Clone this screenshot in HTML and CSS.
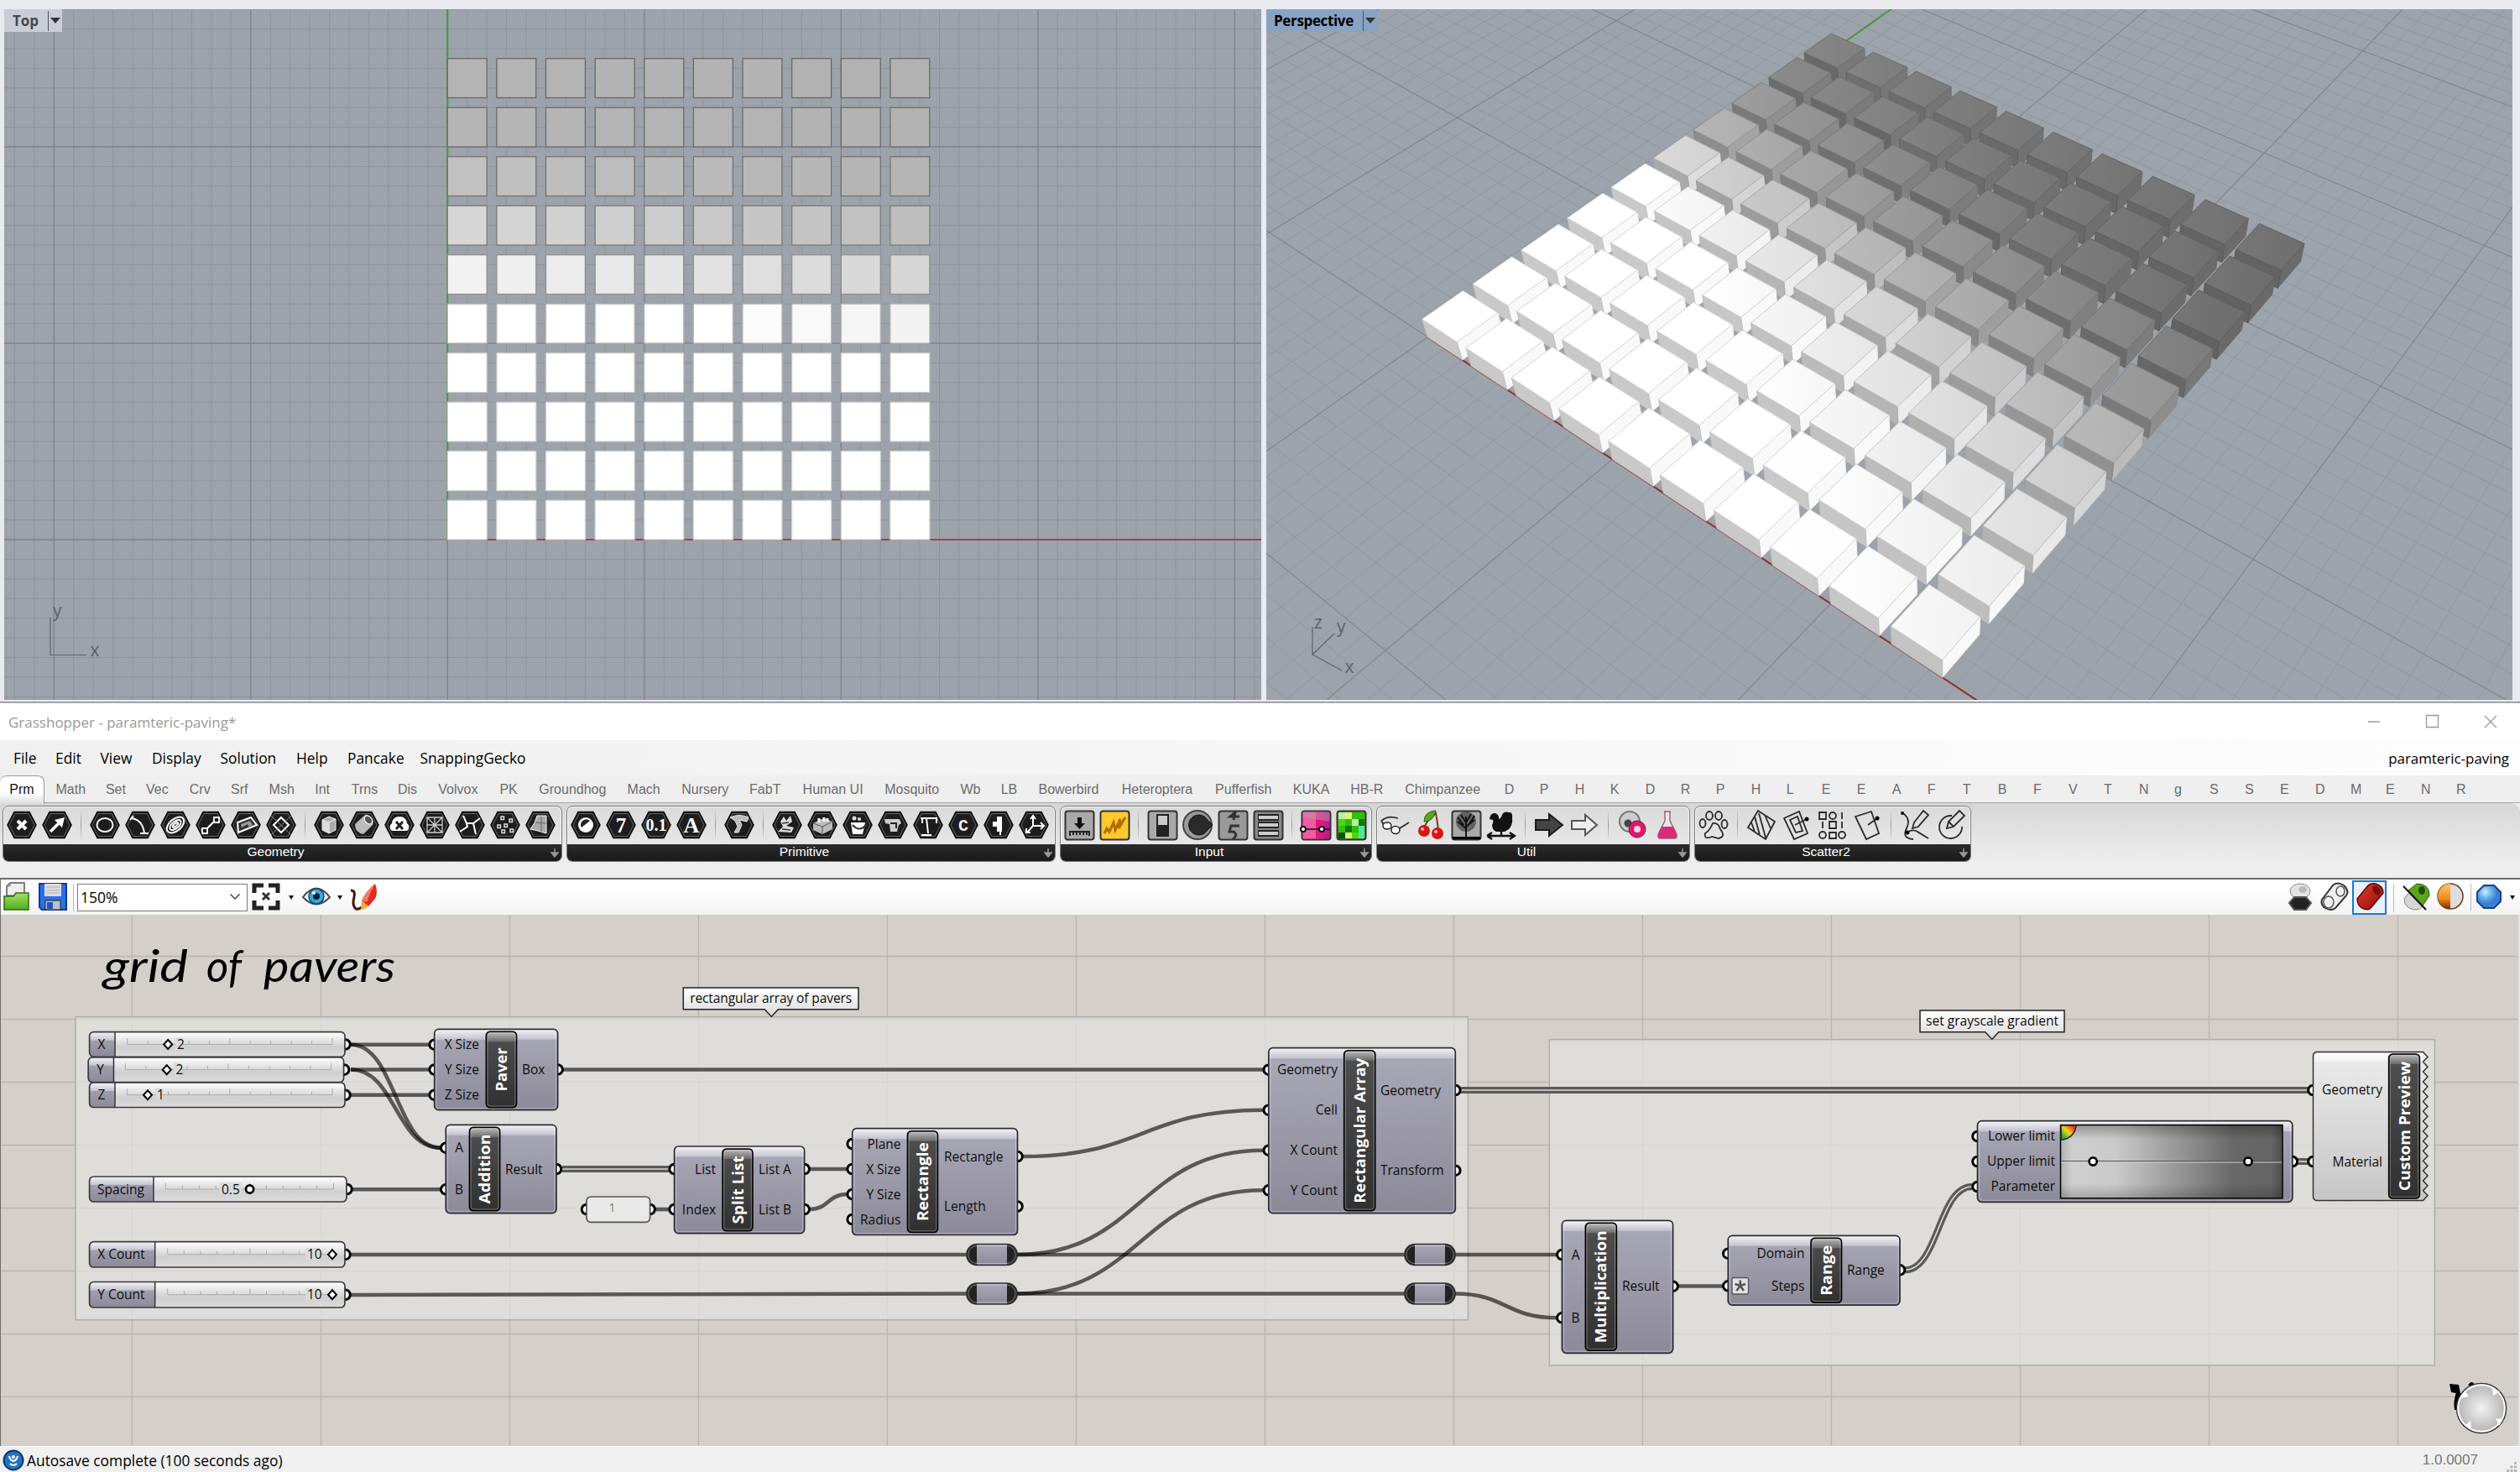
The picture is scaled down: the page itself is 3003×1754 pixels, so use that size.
FILE: index.html
```html
<!DOCTYPE html>
<html lang="en">
<head>
<meta charset="utf-8">
<title>Grasshopper - paramteric-paving*</title>
<link rel="stylesheet" href="styles.css">
</head>
<body>
<main class="desktop">
  <section class="rhino">
    <div class="viewport viewport-top">
      <svg id="topView" class="scene" viewBox="5 11 1498 823"></svg>
      <div class="vp-label"><span>Top</span><i class="caret"></i></div>
    </div>
    <div class="viewport viewport-persp">
      <svg id="perspView" class="scene" viewBox="1509 11 1485 823"></svg>
      <div class="vp-label vp-active"><span>Perspective</span><i class="caret"></i></div>
    </div>
  </section>

  <section class="gh">
    <header class="titlebar">
      <span class="title">Grasshopper - paramteric-paving*</span>
      <svg class="winbtns" width="150" height="20" viewBox="0 0 150 20"><path d="M1 10H15M70.500 2.500h14v14h-14zM140 3l14 14M154 3l-14 14"/></svg>
    </header>
    <nav class="menubar" id="menubar"></nav>
    <nav class="tabs" id="tabs"></nav>
    <div class="ribbon" id="ribbon"></div>
    <div class="toolbar">
      <svg class="ic" viewBox="0 0 34 36"><path d="M5 16V5l4-4h17v16z" fill="#eee" stroke="#555" stroke-width="1.500"/><path d="M9 1v4H5" fill="none" stroke="#777"/><path d="M2 17h11l3-4h15v20H2z" fill="url(#gGreen)" stroke="#2f6b14" stroke-width="1.500"/></svg>
      <svg class="ic ic-save" viewBox="0 0 34 36"><path d="M1 2h32v31H4l-3-3z" fill="#2a6fe8" stroke="#123a9a" stroke-width="2"/><path d="M7 2h20v15H7z" fill="#dcdcdc"/><path d="M9 6h16M9 10h16M9 13h16" stroke="#b5b5b5"/><path d="M8 22h18v11H8z" fill="#bcc0c8" stroke="#223"/><path d="M10 24h7v8h-7z" fill="#1f55c4"/></svg>
      <i class="tsep"></i>
      <div class="combo"><span>150%</span><svg width="14" height="10" viewBox="0 0 14 10"><path d="M1.500 1.500L7 7l5.500-5.500" fill="none" stroke="#444" stroke-width="1.500"/></svg></div>
      <svg class="ic" viewBox="0 0 34 36"><path d="M3 13V4h11M20 4h11v9M31 22v9H20M14 31H3v-9" fill="none" stroke="#222" stroke-width="5"/><path d="M13 13l8 8M21 13l-8 8" stroke="#333" stroke-width="3"/></svg>
      <i class="drop"></i>
      <svg class="ic" viewBox="0 0 34 36"><path d="M1 18Q17-3 33 18Q17 35 1 18z" fill="#e9f2f6" stroke="#4a4a4a" stroke-width="2"/><circle cx="17" cy="17" r="9" fill="#3aa7dc" stroke="#14486a" stroke-width="1.500"/><circle cx="17" cy="17" r="4" fill="#062033"/><circle cx="14" cy="13" r="2" fill="#fff"/></svg>
      <i class="drop drop-eye"></i>
      <svg class="ic" viewBox="0 0 34 36"><path d="M2 10Q8 10 6 18T6 29Q8 35 15 30" fill="none" stroke="#43160e" stroke-width="3"/><path d="M31 2Q35 12 31 20L23 29l-8-6Q19 12 31 2z" fill="#e22c20"/><path d="M31 2Q25 12 21 24l-6-2Q19 12 31 2z" fill="#f77a66"/><path d="M15 22l8 7q-5 4-9 4z" fill="#e7b13a"/></svg>
      <div class="spring"></div>
      <svg class="ic" viewBox="0 0 34 36"><ellipse cx="17" cy="11" rx="12" ry="9" fill="#e3e3e3" stroke="#888"/><ellipse cx="20" cy="9" rx="5" ry="4" fill="#bbb"/><path d="M4 25l6-7h14l6 7-6 8H10z" fill="#222" stroke="#555" stroke-width="2"/></svg>
      <svg class="ic ic-mid" viewBox="0 0 34 36"><path d="M2 21L15 4Q20-1 28 4Q35 11 31 16L18 31Q13 35 6 31Q0 27 2 21z" fill="#f1f1f1" stroke="#333" stroke-width="2"/><ellipse cx="10" cy="24" rx="6" ry="7" fill="none" stroke="#555" stroke-width="1.500"/><ellipse cx="24" cy="11" rx="5" ry="6" fill="none" stroke="#555" stroke-width="1.500"/></svg>
      <div class="picked"><svg class="ic" viewBox="0 0 34 36"><path d="M2 20L15 4q4-3 9-2 9 3 9 11L19 30q-3 4-9 2-8-3-8-12z" fill="url(#gRed)" stroke="#5b0906" stroke-width="1.500"/><ellipse cx="25" cy="10" rx="4" ry="6" fill="#7d0c08" transform="rotate(-35 25 10)"/></svg></div>
      <i class="tsep tsep-r"></i>
      <svg class="ic ic-mid" viewBox="0 0 34 36"><path d="M8 10L18 2q15 0 15 14l-8 12z" fill="#5ba51c" stroke="#255708"/><path d="M3 20l6-8 16 17q-4 5-10 4Q3 31 3 20z" fill="#d5d5d5" stroke="#888"/><path d="M2 5l27 28" stroke="#111" stroke-width="2"/><ellipse cx="24" cy="10" rx="4" ry="5" fill="#234d0a"/></svg>
      <svg class="ic ic-mid" viewBox="0 0 34 36"><circle cx="17" cy="17" r="15" fill="#ddd" stroke="#6b3a1c" stroke-width="1.500"/><path d="M17 2a15 15 0 0 0 0 30z" fill="url(#gOrange)"/></svg>
      <i class="tsep tsep-r2"></i>
      <svg class="ic" viewBox="0 0 34 36"><path d="M11 4h12l8 8v11l-8 8H11l-8-8V12z" fill="url(#gBlue)" stroke="#1c3f8c" stroke-width="2"/></svg>
      <i class="drop drop-end"></i>
      <svg width="0" height="0"><defs>
        <linearGradient id="gGreen" x2="0" y2="1"><stop offset="0" stop-color="#a6e06a"/><stop offset="1" stop-color="#4fae1c"/></linearGradient>
        <linearGradient id="gRed" x2="1" y2="1"><stop offset="0" stop-color="#e8392c"/><stop offset="1" stop-color="#8e0f09"/></linearGradient>
        <linearGradient id="gOrange" x2="0" y2="1"><stop offset="0" stop-color="#ffc46a"/><stop offset=".6" stop-color="#f08a1c"/><stop offset="1" stop-color="#7c2c08"/></linearGradient>
        <radialGradient id="gBlue" cx=".35" cy=".3"><stop offset="0" stop-color="#d6f0ff"/><stop offset=".5" stop-color="#6bb4ee"/><stop offset="1" stop-color="#3b7fd4"/></radialGradient>
      </defs></svg>
    </div>
    <div class="canvas"><svg id="canvas" class="scene" viewBox="1 1090 3000 633"></svg></div>
    <footer class="status">
      <svg width="26" height="26" viewBox="0 0 26 26"><circle cx="13" cy="13" r="11.500" fill="#2273c4" stroke="#0b3767" stroke-width="2"/><path d="M8 8q1 5 5 6q4-1 5-6M9 17q4 4 8 0" fill="none" stroke="#fff" stroke-width="2"/><circle cx="13" cy="9" r="2" fill="#fff"/></svg>
      <span>Autosave complete (100 seconds ago)</span>
      <span class="version">1.0.0007</span>
      <svg class="sizegrip" width="12" height="12" viewBox="0 0 12 12"><path d="M9 0h3v3H9zM9 4.500h3v3H9zM9 9h3v3H9zM4.500 4.500h3v3h-3zM4.500 9h3v3h-3zM0 9h3v3H0z" fill="#b5b5b5"/></svg>
    </footer>
  </section>
</main>
<script src="app.js"></script>
</body>
</html>
```
FILE: styles.css
```css
* { box-sizing: border-box; }
body { margin: 0; background: #efefef; font-family: "Open Sans", "Noto Sans", sans-serif; color: #000; }
.desktop { width: 3003px; height: 1754px; display: flex; flex-direction: column; overflow: hidden; }
.scene { display: block; width: 100%; height: 100%; }

/* modelling viewports */
.rhino { flex: none; height: 837px; padding: 11px 9px 2px 5px; display: flex; gap: 6px; background: #e9ebf0; border-bottom: 1px solid #8d9096; }
.viewport { position: relative; height: 823px; background: #9da3aa; }
.viewport-top { width: 1498px; }
.viewport-persp { width: 1485px; }
.vp-label { position: absolute; left: 0; top: 0; height: 27px; width: 69px; display: flex; align-items: center; background: #c9cdd8; font-size: 17px; font-weight: 700; color: #444850; padding-left: 10px; }
.vp-label span { flex: 1; letter-spacing: 0; }
.vp-label .caret { width: 17px; height: 24px; border-left: 1px solid #555; display: flex; align-items: center; justify-content: center; }
.vp-label .caret::after { content: ""; border: 6px solid transparent; border-top: 7px solid #333; border-bottom: 0; }
.vp-active { width: 132px; padding-left: 9px; background: #88a3c4; color: #000; }
.vp-active span { letter-spacing: -.35px; }

/* editor window */
.gh { flex: 1; display: flex; flex-direction: column; }
.titlebar { height: 45px; background: #fff; border-top: 1px solid #b5b7bb; display: flex; align-items: center; justify-content: space-between; padding: 0 32px 0 10px; }
.title { font-size: 17px; color: #999; }
.winbtns { overflow: visible; fill: none; stroke: #999; stroke-width: 1.300; }
.menubar { height: 42px; display: flex; align-items: center; padding-left: 16px; background: linear-gradient(90deg, #f0f0f0, #fdfdfd); font-size: 17.400px; }
.menubar .doc { margin-left: auto; padding-right: 13px; font-size: 16.900px; }
.tabs { height: 33px; display: flex; font: 16px "Liberation Sans", Arial, sans-serif; color: #6b6b6b; background: #efefef; border-bottom: 1px solid #a5a5a5; position: relative; }
.tab { line-height: 33px; flex: none; white-space: nowrap; }
.tab-on { height: 34px; line-height: 31px; text-align: center; color: #111; background: linear-gradient(#fff 60%, #ddd); border: 1px solid #9a9a9a; border-left: 0; border-bottom: 0; border-radius: 8px 8px 0 0; margin-right: 13.500px; position: relative; z-index: 1; }
.ribbon { height: 89px; padding: 3px 3px 0 3px; display: flex; gap: 5px; background: linear-gradient(#d6d6d6, #efefef 72px); border-radius: 0 12px 0 0; }
.panel { height: 67px; border: 1px solid #7c7c7c; border-radius: 7px; background: linear-gradient(#dadada, #ededed); box-shadow: inset 0 0 0 1px #f5f5f5; overflow: hidden; display: flex; flex-direction: column; }
.panel-icons { height: 45px; display: flex; align-items: center; padding: 0 1px 1px; }
.panel-icons svg { width: 36px; height: 36px; margin: 0 3px; flex: none; overflow: visible; }
.psep { width: 1px; height: 38px; margin: 0 7px; background: linear-gradient(transparent, #999, transparent); }
.panel-name { flex: 1; position: relative; padding-right: 16px; background: linear-gradient(#2c2c2c, #191919); color: #fff; font: 15.500px/18px "Liberation Sans", Arial, sans-serif; text-align: center; }
.panel-name svg { position: absolute; right: 2px; top: 4px; }

.toolbar { height: 44px; display: flex; align-items: center; border-top: 2px solid #6d6d6d; border-left: 1px solid #777; background: linear-gradient(#fff 20%, #f3f3f3); padding-left: 2px; }
.toolbar .ic { width: 34px; height: 36px; flex: none; }
.toolbar .ic-save { margin-left: 9px; }
.toolbar .ic-mid { margin-left: 7px; }
.tsep { width: 1px; height: 33px; background: #bbb; margin: 0 4px 0 7px; }
.tsep-r { margin: 0 2px 0 8px; }
.tsep-r2 { margin: 0 4px 0 7px; }
.combo { width: 203px; height: 33px; margin-right: 5px; border: 1.500px solid #7a7a7a; background: #fff; display: flex; align-items: center; justify-content: space-between; padding: 0 7px 0 3px; font-size: 17.500px; }
.drop { width: 26px; display: flex; justify-content: center; }
.drop::after { content: ""; border: 3.500px solid transparent; border-top: 5px solid #111; border-bottom: 0; }
.drop-eye { width: 22px; }
.drop-end { width: 20px; padding-left: 2px; }
.spring { flex: 1; }
.picked { width: 41px; height: 41px; margin-left: 4px; border: 2px solid #1f78c8; background: #e8f1fa; display: flex; align-items: center; justify-content: center; }

.canvas { height: 633px; border-left: 1px solid #6d6d6d; border-right: 2px solid #e4e4e4; background: #d4cfc8; }
.t { font-family: "Open Sans", "Noto Sans", sans-serif; font-size: 15.500px; fill: #0c0c0c; }
.panel-value { font-size: 14px; fill: #5b8a62; }
.tag { font-family: "Open Sans", "Noto Sans", sans-serif; font-weight: 700; font-size: 18px; fill: #fff; text-anchor: middle; }
.scribble { font-family: "Lato", "Open Sans", sans-serif; font-style: italic; font-size: 53px; fill: #000; }
.end { text-anchor: end; }
.mid { text-anchor: middle; }
.wire { fill: none; stroke: #000; stroke-opacity: .6; stroke-width: 4.600; }
.wire2 { fill: none; stroke: #5b5a57; stroke-width: 8; }
.wire2i { fill: none; stroke: #dcdbd6; stroke-width: 1.600; }
.status { flex: 1; display: flex; align-items: center; gap: 3px; padding: 2px 4px 0 3px; background: #f0f0f0; font-size: 17.400px; border-top: 1px solid #fff; }
.version { margin-left: auto; margin-right: 31px; color: #777; font: 17px "Liberation Sans", Arial, sans-serif; }
.sizegrip { align-self: flex-end; }
```
FILE: app.js
```js
const $ = id => document.getElementById(id);
const f1 = n => n.toFixed(1);

/* ---------- top viewport ---------- */
(function () {
  const ox = 533.3, oy = 643, s = 23.45, sy = 23.4;
  let minor = '', major = '', out = '';
  for (let i = -24; i <= 42; i++) {
    const d = `M${f1(ox + i * s)} 0V840`;
    if (i % 10) minor += d; else major += d;
  }
  for (let j = -9; j <= 28; j++) {
    const d = `M0 ${f1(oy - j * sy)}H1510`;
    if (j % 10) minor += d; else major += d;
  }
  out += `<path d="${minor}" stroke="#8d949c" stroke-width="1"/><path d="${major}" stroke="#7f8288" stroke-width="1.3"/>`;
  out += `<path d="M${ox} ${oy}H1503" stroke="#9c4444" stroke-width="2"/><path d="M${ox} ${oy}V11" stroke="#3f9a44" stroke-width="2"/>`;
  const a = [255, 255, 255, 255, 255, 242, 215, 193, 181, 180];
  const b = [255, 255, 255, 255, 243, 214, 190, 180, 179, 178];
  const st = [215, 212, 208, 200, 185, 140, 120, 110, 104, 100];
  for (let j = 0; j < 10; j++) for (let i = 0; i < 10; i++) {
    let v = a[j] + (b[j] - a[j]) * i / 9;
    if (j === 4) v = i < 6 ? 255 : 255 - (i - 5) * 3;
    v = Math.round(v);
    out += `<rect x="${f1(ox + i * 2.5 * s)}" y="${f1(oy - (j * 2.5 + 2) * sy)}" width="${f1(2 * s)}" height="${f1(2 * sy)}" fill="rgb(${v},${v},${v})" stroke="rgb(${st[j]},${st[j]},${st[j]})" stroke-width="1.2"/>`;
  }
  out += '<path d="M60 736V780.500H103" fill="none" stroke="#5f6368" stroke-width="1.2"/><g fill="#5c6066" font-family="Open Sans" font-size="21"><text x="63" y="735">y</text><text x="107.500" y="781.500">x</text></g>';
  $('topView').innerHTML = out;
})();

/* ---------- perspective viewport ---------- */
(function () {
  const E = 24.5;
  function proj(x, y, z) {
    const u = x / E, v = y / E, k = 1 - z;
    const w = 1 - .19037 * u + .24615 * v + .01092 * k;
    return [(179.45 * u + 1025.12 * v + 1694.6 + 25.3 * k) / w, .9975 * (257.01 * u - 331.08 * v + 381.3 + 25.8 * k) / w];
  }
  const P = (x, y, z) => proj(x, y, z).map(f1).join(' ');
  const poly = (pts, fill, stroke) => `<path d="M${pts.map(p => P(...p)).join('L')}Z" fill="${fill}" stroke="${stroke}" stroke-width="1"/>`;
  let minor = '', major = '', out = '', defs = '';
  for (let x = -150; x <= 70; x++) {
    const y0 = -(1.01 - .00777 * x - .08) / .01005;
    const d = `M${P(x, Math.max(y0, -90), 0)}L${P(x, 160, 0)}`;
    if (x % 10) minor += d; else major += d;
  }
  for (let y = -70; y <= 160; y++) {
    const x1 = (1.01 + .01005 * y - .08) / .00777;
    const d = `M${P(-160, y, 0)}L${P(Math.min(x1, 90), y, 0)}`;
    if (y % 10) minor += d; else major += d;
  }
  out += `<path d="${minor}" stroke="#8d949b" stroke-width=".8"/><path d="${major}" stroke="#82868c" stroke-width="1.2"/>`;
  out += `<path d="M${P(0, 0, 0)}L${P(45, 0, 0)}" stroke="#8c2f2f" stroke-width="2"/><path d="M${P(0, 0, 0)}L${P(0, 50, 0)}" stroke="#3f9a44" stroke-width="2"/>`;
  const A = [302, 297, 290, 280, 260, 215, 178, 155, 137, 132];
  const B = [247, 240, 226, 208, 182, 154, 130, 114, 114, 115];
  const shade = (i, j) => A[j] + (B[j] - A[j]) * Math.pow(Math.max(i, 0) / 9, .85);
  const g = v => { const n = Math.max(0, Math.min(255, Math.round(v))); return `rgb(${n},${n},${n})`; };
  for (let j = 9; j >= 0; j--) for (let i = 0; i < 10; i++) {
    const x = i * 2.5, y = j * 2.5, X = x + 2, Y = y + 2, v = shade(i, j), c = Math.min(255, v);
    defs += `<linearGradient id="b${i}${j}"><stop offset="0" stop-color="${g(v + 3)}"/><stop offset="1" stop-color="${g(v - 5)}"/></linearGradient>`;
    const edge = g(c * .83);
    const side = c > 180 ? Math.min(249, c * 1.03) : c * .92;
    out += poly([[X, y, 1], [X, Y, 1], [X, Y, 0], [X, y, 0]], g(side), g(side * .97));
    out += poly([[x, y, 1], [X, y, 1], [X, y, 0], [x, y, 0]], g(c * (c < 130 ? .86 : .79)), g(c * .76));
    out += poly([[x, y, 1], [X, y, 1], [X, Y, 1], [x, Y, 1]], `url(#b${i}${j})`, edge);
  }
  out += '<path d="M1564 747V780L1590 755M1564 780L1599 799" fill="none" stroke="#5f6368" stroke-width="1.2"/><g fill="#5c6066" font-family="Open Sans" font-size="21"><text x="1566" y="749">z</text><text x="1593" y="754">y</text><text x="1602.500" y="802">x</text></g>';
  $('perspView').innerHTML = `<defs>${defs}</defs>` + out;
})();

/* ---------- menus and tabs ---------- */
const cells = (list, cls) => list.map(([t, w]) => `<span class="${cls}" style="width:${w}px">${t}</span>`).join('');
$('menubar').innerHTML = cells([['File', 50], ['Edit', 53.5], ['View', 61.5], ['Display', 81.5], ['Solution', 90.5], ['Help', 61], ['Pancake', 86.5], ['SnappingGecko', 140]], 'menu') + '<span class="doc">paramteric-paving</span>';
const tabs = [['Math', 59.4], ['Set', 48.2], ['Vec', 51.7], ['Crv', 49.3], ['Srf', 45.5], ['Msh', 54.7], ['Int', 43.5], ['Trns', 55.2], ['Dis', 48.3], ['Volvox', 73.2], ['PK', 46.9], ['Groundhog', 105.3], ['Mach', 64.7], ['Nursery', 80.8], ['FabT', 63.5], ['Human UI', 97.6], ['Mosquito', 90.3], ['Wb', 48.2], ['LB', 44.8], ['Bowerbird', 99.3], ['Heteroptera', 111.3], ['Pufferfish', 92.7], ['KUKA', 68.5], ['HB-R', 65], ['Chimpanzee', 118.4]];
$('tabs').innerHTML = '<span class="tab tab-on" style="width:53px">Prm</span>' + cells(tabs, 'tab') + cells([...'DPHKDRPHLEEAFTBFVTNgSSEDMENR'].map(c => [c, 42.03]), 'tab');

/* ---------- ribbon icons ---------- */
const W = 'fill="none" stroke="#fff" stroke-width="2"';
const hex = inner => `<svg viewBox="-18 -18 36 36"><path d="M-9-15.500H9L17 0L9 15.500H-9L-17 0Z" fill="#1d1d1d" stroke="#0c0c0c" stroke-width="1.500"/><path d="M-8-13.500H8L15 0L8 13.500H-8L-15 0Z" fill="none" stroke="#666"/>${inner}</svg>`;
const box = (inner, bg = '#a9a9a9') => `<svg viewBox="-18 -18 36 36"><rect x="-16.500" y="-16.500" width="34" height="34" rx="3" fill="${bg}" stroke="#333" stroke-width="2"/>${inner}</svg>`;
const raw = inner => `<svg viewBox="-18 -18 36 36">${inner}</svg>`;
const glyph = (c, s) => `<text y="${s * .35}" font-family="Liberation Serif" font-weight="700" font-size="${s}" fill="#fff" text-anchor="middle">${c}</text>`;
const K = 'fill="none" stroke="#2a2a2a" stroke-width="1.800"';
const S = '<i class="psep"></i>';
const panels = [
  ['Geometry', 667, [
    hex(`<path d="M-5-5L5 5M5-5L-5 5" stroke="#fff" stroke-width="4"/>`),
    hex(`<path d="M-8 8L3-3" stroke="#fff" stroke-width="3.500"/><path d="M9-9L6 3L-3-6Z" fill="#fff"/>`), S,
    hex(`<ellipse rx="9.500" ry="8" ${W} stroke-width="3"/>`),
    hex(`<path d="M-10-8Q3-6 5 10M-8-11l-4 5M0 10H10" ${W}/>`),
    hex(`<g transform="rotate(-40)"><ellipse rx="12" ry="7" ${W} stroke-width="1.500"/><ellipse rx="8" ry="4" ${W} stroke-width="1.500"/><ellipse rx="4" ry="1.500" ${W}/></g>`),
    hex(`<path d="M-6 6L6-6" ${W} stroke-width="3"/><path d="M4-9h6v6h-6zM-10 4h6v6h-6z" fill="#1d1d1d" stroke="#fff" stroke-width="1.800"/>`),
    hex(`<path d="M-10-3L6-9L13 0L-9 9Z" fill="#333" stroke="#fff" stroke-width="2"/><path d="M-6-1L5-5L8 0L3 2L2-1L-5 3Z" fill="#999"/>`),
    hex(`<path d="M0-9L9 0L0 9L-9 0Z" ${W}/><path d="M-12-11L12 12M12-11L-12 12" stroke="#888"/>`), S,
    hex(`<path d="M-8-6L0-10L8-7V6L0 10L-8 6Z" fill="#aaa" stroke="#eee"/><path d="M-8-6L0-3L8-7M0-3V10" stroke="#fff" fill="none"/><path d="M-8-6L0-3V10L-8 6Z" fill="#ddd"/>`),
    hex(`<path d="M-11-1L1-12Q5-13 9-8Q12-4 10 0L-1 11Q-11 9-11-1Z" fill="#bbb"/><ellipse cx="5" cy="-6" rx="4" ry="5.500" fill="#555" stroke="#fff" transform="rotate(-40 5 -6)"/>`),
    hex(`<path d="M-9 7q-5-5 0-9q1-8 9-8t9 8q5 4 0 9z" fill="#fff"/><path d="M-4-4L4 5M4-4L-4 5" stroke="#222" stroke-width="3"/>`),
    hex(`<path d="M-9-9H9V9H-9ZM-9 0H9M0-9V9M-9-9L9 9M9-9L-9 9" fill="none" stroke="#ccc" stroke-width="1.300"/>`),
    hex(`<path d="M-8-11L-4-2L4-2L12-8M4-2L7 11M-4-2L-3 2L-12 8" ${W} stroke="#bbb" stroke-width="2.500"/>`),
    hex(`<g fill="none" stroke="#ddd" stroke-width="1.500"><rect x="-5" y="-10" width="3.500" height="3.500"/><rect x="5" y="-7" width="3.500" height="3.500"/><rect x="-9" y="0" width="3.500" height="3.500"/><rect x="-1" y="-1" width="3.500" height="3.500"/><rect x="-4" y="6" width="3.500" height="3.500"/><rect x="6" y="5" width="3.500" height="3.500"/></g>`),
    hex(`<path d="M-4-11L7-11V10L-3 7L-12 5Q-6-2-4-11Z" fill="#aaa" stroke="#fff"/><path d="M1-10V8M-6-3L7-2" stroke="#666" fill="none"/>`)]],
  ['Primitive', 583, [
    hex(`<circle r="9" fill="#fff"/><path d="M-5 3L5-5A6.500 6.500 0 0 0-5 3Z" fill="#222"/>`),
    hex(glyph('7', 25)), hex(glyph('0.1', 20)), hex(glyph('A', 26)), S,
    hex(`<path d="M-11-9Q0-14 11-9L9-4L0-6L3 0L-1 9H-6L-2 2L-5-5Z" fill="#bbb" stroke="#eee"/>`), S,
    hex(`<path d="M-8-4L-4-10L-1-5L4-11L6-4L-1 1L8 3L5 9L-11 8L-5 2Z" fill="#ddd"/><path d="M-6-2L2-3M-6 5L4 6" stroke="#333" stroke-width="1.500"/>`),
    hex(`<path d="M-11-2L1-8L12-4V5L0 11L-11 6Z" fill="#bbb"/><path d="M-11-2L0 2L12-4M0 2V11" stroke="#555" fill="none"/><path d="M-4-8v5M2-9v5M6-8v4" stroke="#fff" stroke-width="3"/>`),
    hex(`<path d="M-8-3H9L6 11H-6Z" fill="#fff"/><path d="M-6 0Q2 9 10 0" stroke="#333" fill="none" stroke-width="2"/><circle cx="-4" cy="-8" r="2.500" fill="#ddd"/><circle cx="2" cy="-7" r="2" fill="#ddd"/>`),
    hex(`<path d="M-10-7H8L10-2L7 0L5 8H-3L-4-1L-9-2Z" fill="#ccc"/><path d="M-3-2H4V4" stroke="#222" stroke-width="2" fill="none"/>`),
    hex(`<path d="M-9-8H10V-2M-7-9V-2M-2-8L0 10M-8 12H4" ${W} stroke-width="3.500"/>`),
    hex(`<text y="7" font-family="Liberation Mono" font-weight="700" font-size="20" fill="#eee" text-anchor="middle">C</text>`),
    hex(`<path d="M-7-4H-2V-10H4V8H3V12H1V8H-2V2H-7Z" fill="#fff"/>`),
    hex(`<path d="M-1-10V1L11 1M-1 1L-8 9M-4-7L-1-11L2-7M8-3L12 1L8 5M-9 4L-9 9L-4 9" ${W} stroke="#ddd"/>`)]],
  ['Input', 372, [
    box(`<path d="M-2-9H3V-2H7L.500 5L-6-2H-2Z" fill="#111"/><path d="M-12 8H13M-11 8v5M-7 8v4M-3 8v4M1 8v4M5 8v4M9 8v4M12 8v5" stroke="#222" stroke-width="2"/>`),
    box(`<path d="M-12 10L-9 4L-6 8L-1-3L1 6L7-7L5 4L13-9" fill="none" stroke="#b56a00" stroke-width="3"/>`, '#fdc92c'), S,
    box(`<path d="M-7-13H8V14H-7Z" fill="#222"/><path d="M-5-11H6V0H-5Z" fill="#ccc"/>`),
    raw(`<circle r="17" fill="#999" stroke="#444" stroke-width="2"/><path d="M12-6L18 0L12 6A12 12 0 1 1 12-6Z" fill="#2a2a2a" stroke="#111"/>`),
    box(`<path d="M4-16L-3-10H8M3-16L1-6M8 1H-2L-4 8H1q6 4-1 9" fill="none" stroke="#333" stroke-width="3"/>`, '#999'),
    box(`<path d="M-12-9H13M-12 0H13M-12 10H13" stroke="#222" stroke-width="8"/><path d="M-11-9H12M-11 0H12M-11 10H12" stroke="#ccc" stroke-width="4"/>`, '#888'), S,
    box(`<path d="M-15.500-15.500H3V16.500H-15.500Z" fill="#f05aa0"/><path d="M0-15.500H10V16.500H0Z" fill="#e0187c"/><path d="M-15.500-15.500H16.500V-4L-15.500-9Z" fill="#b89aa8" opacity=".5"/><path d="M-16 5H17" stroke="#111" stroke-width="1.500"/><circle cx="7" cy="5" r="3" fill="#fff" stroke="#111" stroke-width="2"/><circle cx="-15" cy="5" r="3" fill="#fff" stroke="#111" stroke-width="2"/>`, '#c2188e'),
    box(`<path d="M-15-15h8v8h-8zM1-7h8v8h-8z" fill="#b5f0a0"/><path d="M-7-15h8v8h-8zM-7 9h8v7h-8z" fill="#e2f56a"/><path d="M-7 1h8v8h-8zM9-7h7v8h-7z" fill="#0b7a0b"/><path d="M-15-7h8v8h-8zM1 9h8v7h-8z" fill="#4bd80a"/><path d="M9 1h7v15h-7z" fill="#50e8a0"/><path d="M-15 9h8v7h-8z" fill="#074a07"/>`, '#2fbf12')]],
  ['Util', 374, [
    raw(`<path d="M-17-5q8-7 20-3M-17-5l4 6M5 4l11-7" ${K} stroke-width="1.500"/><ellipse cx="-10" cy="1" rx="5" ry="4" fill="#fff" stroke="#222" stroke-width="1.500"/><ellipse cx="0" cy="6" rx="5" ry="4.500" fill="#fff" stroke="#222" stroke-width="1.500"/>`),
    raw(`<path d="M-8 4Q-5-6 6-14Q8-4 9 6" fill="none" stroke="#7c3a18" stroke-width="2"/><path d="M-8-4Q-8-16 6-17Q3-4-8-4Z" fill="#5ea52a" stroke="#2c5c10"/><circle cx="-8" cy="7" r="7" fill="#d81515"/><circle cx="8" cy="10" r="7" fill="#d81515"/><circle cx="-10" cy="5" r="2" fill="#ffb0b0"/><circle cx="6" cy="8" r="2" fill="#ffb0b0"/>`),
    box(`<circle cy="-4" r="12" fill="#333" opacity=".6"/><path d="M0 16V-10M0 4L-10-4M0 2L10-6M-6-12L0-3L6-13M-10-9L-3 0M10-11L4-1" stroke="#111" stroke-width="2" fill="none"/><path d="M-16 14H17V17H-16Z" fill="#000"/>`),
    raw(`<path d="M-14-7Q-13-15-7-14Q-2-12-3-7Q0-8 1-12Q3-17 9-15Q14-16 13-8Q14 0 9 5L4 8H-6Q-11 6-11 0Q-9-3-10-6Z" fill="#111"/><path d="M0 6V14M-16 13H16M-17 13l6-4M-17 13l6 4M10 9l6 4-6 4" stroke="#111" stroke-width="2.300" fill="none"/>`), S,
    raw(`<path d="M-16-6H0V-13L16 0L0 13V6H-16Z" fill="#444" stroke="#1a1a1a" stroke-width="2"/>`),
    raw(`<path d="M-15-5H1V-12L15 0L1 12V5H-15Z" fill="#eee" stroke="#555" stroke-width="2"/>`), S,
    raw(`<circle cx="-3" cy="-4" r="12" fill="#ccc" stroke="#777" stroke-width="2"/><circle cx="-5" cy="-2" r="4.500" fill="#444"/><circle cx="6" cy="5" r="10" fill="#d81b6a" stroke="#8a0f42"/><circle cx="6" cy="5" r="4" fill="#fff" opacity=".8"/>`),
    raw(`<path d="M-4-16H4M-3-16V-5L-11 11Q-12 16-8 16H8Q12 16 11 11L3-5V-16" fill="#f7dfe8" stroke="#777" stroke-width="1.500"/><path d="M-7 2H7L11 12Q11 16 8 16H-8Q-12 16-11 12Z" fill="#dd2a78"/>`)]],
  ['Scatter2', 330, [
    raw(`<g ${K} stroke-width="2"><ellipse cx="-5" cy="-11" rx="4" ry="5"/><ellipse cx="6" cy="-11" rx="4" ry="5"/><ellipse cx="-13" cy="-2" rx="3.500" ry="5"/><ellipse cx="13" cy="-1" rx="3.500" ry="5"/><path d="M-1-2Q6-3 8 5Q15 14 6 16L-2 14Q-12 18-10 10Q-4 6-1-2Z"/></g>`), S,
    raw(`<path d="M-4-17L16-4L5 17L-16 3ZM-8-10L-2 12M-3-14L5 15M4-12L11 4M-12-3L-8 8" ${K}/>`),
    raw(`<path d="M-15-8L3-16L13 10L-3 17ZM-8-6L1-10L7 7L-1 9ZM-2 0L14-8" ${K}/><circle cx="12" cy="-7" r="2.500"/>`),
    raw(`<path d="M-15-15h8v8h-8zM-3-4h8v8h-8zM-3 9h8v7h-8zM12-15V-7M12-4V4M-11-4V4" ${K}/><circle cx="1" cy="-11" r="4" ${K}/><circle cx="-11" cy="12" r="4" ${K}/><circle cx="12" cy="12" r="4" ${K}/>`),
    raw(`<path d="M-14-10L5-16L14 10L-1 17ZM1 0L12-8" ${K}/><circle cx="12" cy="-8" r="2.500"/>`), S,
    raw(`<path d="M-16-15Q-4-8-10 4T-2 17M-11 10Q-3 4 3 8T16 16M-1-3L10-17L16-12L4 2L-3 4Z" ${K}/><circle cx="-9" cy="9" r="2.500"/><circle cx="-15" cy="-14" r="2"/>`),
    raw(`<path d="M2-11H0A13.500 13.500 0 1 0 14 2M-4 4L-2-4L11-17L17-11L4 2ZM-2-4L4 2" ${K}/>`)]]
];
$('ribbon').innerHTML = panels.map(([n, w, ic]) => `<div class="panel" style="width:${w}px"><div class="panel-icons">${ic.join('')}</div><div class="panel-name">${n}<svg width="12" height="12" viewBox="0 0 12 12"><path d="M6 1V10M2 6H10L6 11Z" fill="#999" stroke="#999" stroke-width="1.500"/></svg></div></div>`).join('');

/* ---------- node canvas ---------- */
(function () {
  let o = `<defs>
  <linearGradient id="nb" x2="0" y2="1"><stop offset="0" stop-color="#aaa9b8"/><stop offset="1" stop-color="#8c8a99"/></linearGradient>
  <linearGradient id="nh" x2="0" y2="1"><stop offset="0" stop-color="#f4f4f6"/><stop offset="1" stop-color="#c3c2cf"/></linearGradient>
  <linearGradient id="gb" x2="0" y2="1"><stop offset="0" stop-color="#ececec"/><stop offset="1" stop-color="#c6c6c6"/></linearGradient>
  <linearGradient id="gh" x2="0" y2="1"><stop offset="0" stop-color="#fff"/><stop offset="1" stop-color="#efefef"/></linearGradient>
  <linearGradient id="tb" x2="0" y2="1"><stop offset="0" stop-color="#505050"/><stop offset="1" stop-color="#303030"/></linearGradient>
  <linearGradient id="th" x2="0" y2="1"><stop offset="0" stop-color="#b8b8b8"/><stop offset="1" stop-color="#6a6a6a"/></linearGradient>
  <linearGradient id="sb" x2="0" y2="1"><stop offset="0" stop-color="#fff"/><stop offset=".35" stop-color="#e4e4e4"/><stop offset=".6" stop-color="#d0d0d0"/><stop offset="1" stop-color="#dcdcdc"/></linearGradient>
  <linearGradient id="cb" x2="0" y2="1"><stop offset="0" stop-color="#fff"/><stop offset="1" stop-color="#d9d9d9"/></linearGradient>
  <linearGradient id="ramp"><stop offset="0" stop-color="#b0b0b0"/><stop offset=".05" stop-color="#cfcfcf"/><stop offset=".25" stop-color="#cacaca"/><stop offset=".78" stop-color="#686868"/><stop offset=".95" stop-color="#656565"/><stop offset="1" stop-color="#4c4c4c"/></linearGradient>
  <linearGradient id="vig" x2="0" y2="1"><stop offset="0" stop-opacity=".28"/><stop offset=".2" stop-opacity="0"/><stop offset=".8" stop-opacity="0"/><stop offset="1" stop-opacity=".2"/></linearGradient>
  <linearGradient id="hue" x1="0" y1="1" x2="1" y2="0"><stop offset=".15" stop-color="#1faa3a"/><stop offset=".5" stop-color="#e8d820"/><stop offset=".85" stop-color="#f0380c"/></linearGradient>
  <radialGradient id="nav"><stop offset="0" stop-color="#f2f2f2"/><stop offset="1" stop-color="#b4b4b4"/></radialGradient></defs>`;
  let grid = '';
  for (let x = 157.5; x < 3003; x += 225) grid += `M${x} 1090V1724`;
  for (let y = 1139.5; y < 1724; y += 75) grid += `M0 ${y}H3003`;
  o += `<path d="${grid}" stroke="#b9b5ae" stroke-width="1.300"/>`;
  const group = (x, y, X, Y) => o += `<rect x="${x}" y="${y}" width="${X - x}" height="${Y - y}" fill="#e2e3e0" fill-opacity=".7" stroke="#adaca8" stroke-width="1.500"/>`;
  group(90, 1211.7, 1749.4, 1572.7);
  group(1846.4, 1238.7, 2901.3, 1627);

  const curve = (x, y, X, Y) => { const d = y === Y ? 0 : (X - x) * .5; return `M${x} ${y}C${x + d} ${y} ${X - d} ${Y} ${X} ${Y}`; };
  const wire = (...a) => o += `<path class="wire" d="${curve(...a)}"/>`;
  const wire2 = (...a) => o += `<path class="wire2" d="${curve(...a)}"/><path class="wire2i" d="${curve(...a)}"/>`;
  wire(418, 1244.7, 511, 1244.7); wire(418, 1274.5, 511, 1274.5); wire(418, 1304.7, 511, 1304.7);
  wire(418, 1244.7, 525, 1367.7); wire(418, 1274.5, 525, 1367.7);
  wire(420, 1417.3, 525, 1417.3); wire(671, 1274.5, 1505, 1274.5);
  wire2(670, 1393, 797, 1393); wire(781, 1441, 797, 1441);
  wire(965, 1393, 1009, 1393); wire(965, 1441, 1009, 1423);
  wire(1219, 1378, 1505, 1322.7);
  wire(418, 1495, 1152, 1495); wire(418, 1543, 1152, 1541.500);
  wire(1212, 1495, 1505, 1370.7); wire(1212, 1541.5, 1505, 1418.3);
  wire(1212, 1495, 1674, 1495); wire(1212, 1541.5, 1674, 1541.5);
  wire(1734, 1495, 1855, 1495); wire(1734, 1541.5, 1855, 1570.3);
  wire2(1741, 1299, 2750, 1299); wire(2000, 1532.5, 2053, 1532.5);
  wire2(2270, 1513.3, 2350, 1414); wire2(2738, 1384, 2750, 1384);

  const port = (x, y) => o += `<circle cx="${x}" cy="${y}" r="5.800" fill="#fff" stroke="#000" stroke-width="3"/>`;
  const text = (x, y, s, c = '') => o += `<text class="t ${c}" x="${x}" y="${y + 5.5}">${s}</text>`;
  const tag = (x, X, y, Y, s, len) => {
    o += `<rect x="${x}" y="${y}" width="${X - x}" height="${Y - y}" rx="4.500" fill="url(#tb)" stroke="#000" stroke-width="1.500"/><path d="M${x + 1.5} ${y + 12}V${y + 5}q0-4 4-4H${X - 5}q4 0 4 4V${y + 12}z" fill="url(#th)"/><rect x="${x + 1.7}" y="${y + 1.7}" width="${X - x - 3.4}" height="${Y - y - 3.4}" rx="3.500" fill="none" stroke="#fff" stroke-opacity=".3"/>`;
    o += `<text class="tag" transform="translate(${(x + X) / 2 + 6.5} ${(y + Y) / 2}) rotate(-90)" textLength="${len}" lengthAdjust="spacingAndGlyphs">${s}</text>`;
  };
  const body = (x, y, X, Y, k = 'n') => o += `<rect x="${x}" y="${y}" width="${X - x}" height="${Y - y}" rx="5" fill="url(#${k}b)"/><path d="M${x} ${y + 12.5}V${y + 5}q0-5 5-5H${X - 5}q5 0 5 5V${y + 12.5}z" fill="url(#${k}h)"/><rect x="${x + 2}" y="${y + 2}" width="${X - x - 4}" height="${Y - y - 4}" rx="4" fill="none" stroke="#fff" stroke-opacity=".35"/><rect x="${x}" y="${y}" width="${X - x}" height="${Y - y}" rx="5" fill="none" stroke="#2c2c33" stroke-width="1.700"/>`;
  function node(x, y, X, Y, tx, tX, name, len, ins, inR, outs, outL) {
    ins.forEach(p => port(x, p[1])); outs.forEach(p => port(X, p[1]));
    body(x, y, X, Y); tag(tx, tX, y + 3, Y - 3, name, len);
    ins.forEach(p => text(inR, p[1], p[0], 'end')); outs.forEach(p => text(outL, p[1], p[0]));
  }
  node(517.7, 1226.3, 664.6, 1322.7, 579.3, 615.6, 'Paver', 52, [['X Size', 1244.7], ['Y Size', 1274.5], ['Z Size', 1304.7]], 571, [['Box', 1274.5]], 622);
  node(531.3, 1340.3, 663, 1445.7, 559.4, 595.7, 'Addition', 83, [['A', 1367.7], ['B', 1417.3]], 552, [['Result', 1393]], 602);
  node(803.6, 1366, 958.6, 1469.7, 861, 897, 'Split List', 81, [['List', 1393], ['Index', 1441]], 853, [['List A', 1393], ['List B', 1441]], 904);
  node(1015.7, 1344.7, 1212.5, 1471.5, 1081.4, 1117.5, 'Rectangle', 94, [['Plane', 1363], ['X Size', 1393], ['Y Size', 1423], ['Radius', 1453]], 1073.5, [['Rectangle', 1378], ['Length', 1437.5]], 1125);
  node(1511.8, 1248.7, 1734.3, 1445.7, 1601.6, 1638.8, 'Rectangular Array', 173, [['Geometry', 1274.7], ['Cell', 1322.7], ['X Count', 1370.7], ['Y Count', 1418.3]], 1594, [['Geometry', 1299], ['Transform', 1394.7]], 1645);
  node(1861.4, 1454.3, 1993.6, 1612.3, 1889.3, 1926.4, 'Multiplication', 134, [['A', 1495], ['B', 1570.3]], 1882.5, [['Result', 1532.7]], 1933);
  node(2059.3, 1472.3, 2264, 1555.2, 2158, 2194.6, 'Range', 60, [['Domain', 1493.7], ['Steps', 1532.3]], 2150.5, [['Range', 1513.3]], 2201);
  o += '<rect x="2064" y="1522.500" width="19.500" height="19.500" rx="2" fill="#e2e2e2" stroke="#555" stroke-width="1.300"/><path d="M2073.800 1525.500V1532L2080 1530M2073.800 1532L2078 1538M2073.800 1532L2069.500 1538M2073.800 1532L2067.500 1530" stroke="#555" stroke-width="2.600" fill="none"/>';

  [[1152, 1482.5], [1152, 1529], [1674, 1482.5], [1674, 1529]].forEach(([x, y]) => {
    o += `<rect x="${x}" y="${y}" width="60" height="25" rx="12" fill="#222"/><path d="M${x + 12} ${y}h36v25h-36z" fill="url(#nb)"/><rect x="${x + 2}" y="${y + 2}" width="56" height="21" rx="10" fill="none" stroke="#fff" stroke-opacity=".4"/><rect x="${x}" y="${y}" width="60" height="25" rx="12" fill="none" stroke="#333" stroke-width="1.700"/>`;
  });

  function slider(x, X, y, Y, dx, name, nx, a, b, n, hx, val, vx, round) {
    const cy = (y + Y) / 2;
    port(X + .5, cy);
    o += `<rect x="${x}" y="${y}" width="${X - x}" height="${Y - y}" rx="5" fill="url(#sb)"/><path d="M${dx} ${y}H${x + 5}q-5 0-5 5V${Y - 5}q0 5 5 5H${dx}z" fill="url(#nb)"/><path d="M${dx} ${y + 10}V${y}H${x + 5}q-5 0-5 5V${y + 10}z" fill="url(#nh)"/><path d="M${dx} ${y}V${Y}" stroke="#333" stroke-width="1.500"/><rect x="${x}" y="${y}" width="${X - x}" height="${Y - y}" rx="5" fill="none" stroke="#3a3a3f" stroke-width="1.700"/>`;
    let d = `M${a} ${cy}H${b}`;
    for (let i = 0; i <= n; i++) d += `M${a + (b - a) * i / n} ${cy}v${i % (n / 2) ? -4.5 : -7.5}`;
    o += `<path d="${d}" fill="none" stroke="#aaa" stroke-width="1"/>`;
    const w = val.length * 8.5;
    o += `<rect x="${vx - 2}" y="${cy - 8}" width="${w}" height="14" fill="#dadada"/>`;
    text(nx, cy, name, 'mid'); text(vx, cy, val);
    o += round ? `<circle cx="${hx}" cy="${cy}" r="4.600" fill="#fff" stroke="#000" stroke-width="2.800"/>` : `<path d="M${hx} ${cy - 5.5}l5 5.500l-5 5.500l-5-5.500z" fill="#fff" stroke="#000" stroke-width="2"/>`;
  }
  slider(106.6, 411, 1229.7, 1259.3, 137, 'X', 121, 151.7, 396, 10, 200.2, '2', 211);
  slider(106.6, 411, 1290, 1319.5, 137, 'Z', 121, 151.7, 396, 10, 176, '1', 187);
  slider(105.2, 409.6, 1259.8, 1289.5, 135.5, 'Y', 119.5, 149.3, 394.6, 10, 198.7, '2', 209.500);
  slider(106.6, 413, 1402, 1432, 183, 'Spacing', 144, 197.3, 397.5, 10, 297.6, '0.5', 264, true);
  slider(106.6, 411, 1479.7, 1510, 184.7, 'X Count', 144.5, 199.7, 396, 10, 396, '10', 366);
  slider(106.6, 411, 1527.5, 1558, 184.7, 'Y Count', 144.5, 199.7, 396, 10, 396, '10', 366);

  port(699, 1441); port(774.6, 1441);
  o += '<rect x="699" y="1426" width="75.600" height="30.300" rx="5" fill="#e9e9e9" stroke="#555" stroke-width="1.700"/><text class="t mid panel-value" x="729.500" y="1444">1</text>';

  [1354, 1384, 1414].forEach(y => port(2356.5, y)); port(2731.8, 1384);
  body(2356.5, 1335.7, 2731.8, 1432.3);
  text(2449, 1353.5, 'Lower limit', 'end'); text(2449, 1383.7, 'Upper limit', 'end'); text(2449, 1413.7, 'Parameter', 'end');
  o += '<rect x="2455.500" y="1340.500" width="264.500" height="87.300" fill="url(#ramp)"/><rect x="2455.500" y="1340.500" width="264.500" height="87.300" fill="url(#vig)" stroke="#000" stroke-width="1.500"/><path d="M2456 1341H2474A18 18 0 0 1 2456 1358Z" fill="url(#hue)" stroke="#222" stroke-width="1.500"/><path d="M2456 1383.500H2719" stroke="#555"/><path d="M2456 1385H2719" stroke="#ccc"/><g fill="#fff" stroke="#000" stroke-width="2.600"><circle cx="2494.200" cy="1384" r="4.600"/><circle cx="2679" cy="1384" r="4.600"/></g>';

  port(2756.5, 1299); port(2756.5, 1384);
  let z = '';
  for (let y = 1253.5, i = 0; i < 15; i++, y += 11.8) z += `L2893 ${f1(y + 5.9)}L2887.500 ${f1(y + 11.8)}`;
  o += `<path d="M2761.500 1253.500H2887.500${z}H2761.500q-5 0-5-5V1258.500q0-5 5-5Z" fill="url(#gb)" stroke="#333" stroke-width="1.500"/><path d="M2758 1265.500V1259q0-4 4-4H2887v10.500z" fill="url(#gh)"/>`;
  tag(2846.6, 2883.4, 1256, 1428, 'Custom Preview', 154);
  text(2839, 1298.7, 'Geometry', 'end'); text(2839, 1384, 'Material', 'end');

  const balloon = (x, X, y, Y, tx, ty, s, len) => {
    o += `<path d="M${x} ${y}H${X}V${Y}H${tx + 8}L${tx} ${ty}L${tx - 8} ${Y}H${x}Z" fill="url(#cb)" stroke="#222" stroke-width="1.500"/><text class="t mid" x="${(x + X) / 2}" y="${y + 17.8}" textLength="${len}">${s}</text>`;
  };
  balloon(814.3, 1023, 1177, 1202.7, 919.3, 1211.5, 'rectangular array of pavers', 193);
  balloon(2288, 2460, 1204, 1229.7, 2373.8, 1238.5, 'set grayscale gradient', 158);
  [['grid', 123, 101], ['of', 246, 42], ['pavers', 314, 157]].forEach(([w, x, l]) => {
    o += `<text class="scribble" x="${x}" y="1169.500" textLength="${l}" lengthAdjust="spacingAndGlyphs">${w}</text>`;
  });

  o += '<path d="M2919 1649L2930 1650L2932 1661L2921 1659ZM2927 1659l9 4l-7 17h-4q-2-9 2-21zM2941 1651q4-8 9 0z" fill="#000"/><circle cx="2957" cy="1678" r="29.500" fill="url(#nav)" stroke="#333" stroke-width="1.500"/><circle cx="2957" cy="1678" r="27.800" fill="none" stroke="#fff" stroke-width="2"/><path d="M2933 1666l4-9l5 7zM2970 1653l9 5l-8 5zM2983 1691l-9-1l4 9zM2945 1702l-8-3l7-6z" fill="#fff"/>';
  $('canvas').innerHTML = o;
})();
```
